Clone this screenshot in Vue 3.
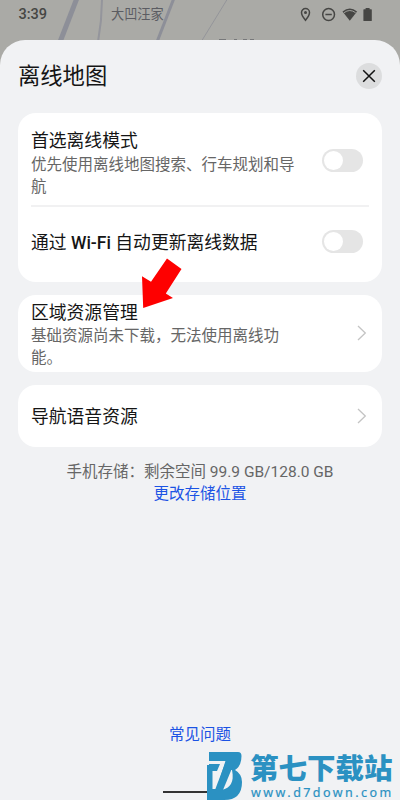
<script setup>
const mapLabel = '大凹汪家'
</script>

<template>
  <main class="phone">
    <header class="map">
      <svg class="roads" viewBox="0 0 400 70" width="400" height="70">
        <g fill="none">
          <path d="M77 -2 60 42" stroke="#8d8f98" stroke-width="5" />
          <path d="M102 -2Q102 20 98 42" stroke="#94959c" stroke-width="2" />
          <path d="M174 -2 157 42" stroke="#8d8f98" stroke-width="3" />
          <path d="M228 -2 201 42" stroke="#94959a" stroke-width="1" />
          <path d="M219 39.500h7M234 39.500h3M243 39.500h4M250 39.500h4" stroke="#77787a" stroke-width="1" />
        </g>
      </svg>
      <span class="time">3:39</span>
      <span class="place">{{ mapLabel }}</span>
      <svg class="status" viewBox="0 0 74 16" width="74" height="16">
        <path d="M5.500 1.600a4 4 0 0 0-4 4C1.500 8.600 5.500 13.300 5.500 13.300S9.500 8.600 9.500 5.600a4 4 0 0 0-4-4Z" fill="none" stroke="#464644" stroke-width="1.500" />
        <circle cx="5.500" cy="5.500" r="1.500" fill="#464644" />
        <circle cx="28.600" cy="7.500" r="5.900" fill="none" stroke="#464644" stroke-width="1.500" />
        <path d="M25.400 7.500h6.400" stroke="#464644" stroke-width="1.500" />
        <path d="M42.500 4.600Q49.800-1.400 57.100 4.600L49.800 13.800Z" fill="#464644" />
        <path d="M44 5.700Q49.800 1.300 55.600 5.700" fill="none" stroke="#aaaaa6" stroke-width=".9" />
        <path d="M65.600 1.200V1h4v1.200h1.600q.6 0 .6.600v10.600q0 .6-.6.600h-7.200q-.6 0-.6-.6V2.800q0-.6.600-.6h1.600Z" fill="#464644" />
      </svg>
    </header>

    <section class="sheet">
      <div class="heading">
        <h1>离线地图</h1>
        <button class="close" aria-label="关闭">
          <svg viewBox="0 0 26 26" width="26" height="26"><path d="m7.200 7.200 11.600 11.600M18.800 7.200 7.200 18.800" stroke="#111" stroke-width="1.500" /></svg>
        </button>
      </div>

      <div class="card settings">
        <div class="row first">
          <div class="copy">
            <h2>首选离线模式</h2>
            <p>优先使用离线地图搜索、行车规划和导航</p>
          </div>
          <span class="switch"></span>
        </div>
        <div class="row second">
          <h2>通过 <b>Wi-Fi</b> 自动更新离线数据</h2>
          <span class="switch"></span>
        </div>
      </div>

      <div class="card region">
        <div class="copy">
          <h2>区域资源管理</h2>
          <p>基础资源尚未下载，无法使用离线功能。</p>
        </div>
        <svg class="chevron" viewBox="0 0 10 16" width="10" height="16"><path d="m1 1 7.300 7L1 15" fill="none" stroke="#c4c4c4" stroke-width="1.300" /></svg>
      </div>

      <div class="card voice">
        <h2>导航语音资源</h2>
        <svg class="chevron" viewBox="0 0 10 16" width="10" height="16"><path d="m1 1 7.300 7L1 15" fill="none" stroke="#c4c4c4" stroke-width="1.300" /></svg>
      </div>

      <p class="storage">手机存储：剩余空间 99.9 GB/128.0 GB</p>
      <a class="link">更改存储位置</a>
      <a class="link faq">常见问题</a>
    </section>

    <svg class="arrow" viewBox="0 0 44 54" width="44" height="54"><path d="M27 2.500 41.500 13 25.800 37.500 33 42 3.200 52 2 20.200 11 25.700Z" fill="#fe0000" /></svg>
    <span class="home"></span>
    <div class="watermark">
      <svg class="logo" viewBox="0 0 36 48" width="36" height="48">
        <path d="M2 0H31Q34.500 0 34.500 4Q34.500 14 28 18Q35 22 35 30Q35 48 17 48H0V13H2Z" fill="#2b91c2" />
        <path d="M0 9H18.500L9.500 37H5.500V19H10L13 12H0Z" fill="#f1f2f4" />
        <path d="M25 18Q28.500 35 14.500 38L22 18Z" fill="#f1f2f4" />
        <path d="M19 9H28L16 38H8Z" fill="#2b91c2" />
      </svg>
      <div class="brand">
        <span class="brand-name">第七下载站</span>
        <span class="brand-url">www.d7down.com</span>
      </div>
    </div>
  </main>
</template>

<style>
body { margin: 0; }
</style>

<style scoped>
* { box-sizing: border-box; }
.phone { position: relative; width: 400px; height: 800px; overflow: hidden; background: #aaaaa6; font-family: Roboto, "Noto Sans CJK SC", sans-serif; color: #151515; }
.map { position: relative; height: 40px; }
.roads { position: absolute; left: 0; top: 0; }
.time { position: absolute; left: 18.500px; top: 5px; font: 500 14.500px/20px Roboto, sans-serif; color: #464644; }
.place { position: absolute; left: 111px; top: 5px; font-size: 13.200px; line-height: 20px; color: #5b5c62; }
.status { position: absolute; left: 300px; top: 7px; }
.sheet { position: relative; display: flex; flex-direction: column; height: 760px; padding: 0 18px; background: #f1f2f4; border-radius: 25px 25px 0 0; }
.heading { display: flex; height: 73px; align-items: center; justify-content: space-between; padding-bottom: 1px; }
h1, h2, p { margin: 0; font-weight: 400; }
h1 { font-size: 22.300px; line-height: 30px; }
h2 { font-size: 17.800px; line-height: 24px; white-space: nowrap; font-weight: 400; padding-top: 2px; }
h2 b { font-weight: 500; font-size: 17.500px; }
p { font-size: 15.500px; line-height: 22.500px; color: #666; }
.close { width: 26px; height: 26px; padding: 0; border: 0; border-radius: 50%; background: #dcddde; }
.close svg { display: block; }
.card { flex: none; background: #fff; border-radius: 18px; padding: 0 13px; }
.settings { height: 169px; }
.row { display: flex; align-items: center; justify-content: space-between; }
.first { height: 94px; border-bottom: 2px solid #f1f1f2; padding-top: 3px; }
.first p { padding-top: 1px; }
.first .copy { padding-top: 4px; }
.second { height: 69px; }
.copy { width: 270px; }
.switch { width: 41px; height: 23px; padding: 2px; margin-right: 6px; border-radius: 12px; background: #e5e5e5; }
.switch::before { content: ""; display: block; width: 19px; height: 19px; border-radius: 50%; background: #fff; }
.region { display: flex; align-items: center; justify-content: space-between; height: 77px; margin-top: 13px; }
.region .copy { width: 254px; padding-top: 1px; }
.region p { line-height: 22px; }
.voice { display: flex; align-items: center; justify-content: space-between; height: 62px; margin-top: 13px; }
.chevron { margin-right: 2px; margin-bottom: 1px; }
.storage { margin-top: 14px; text-align: center; line-height: 22px; }
.link { text-align: center; font-size: 15.500px; line-height: 22px; color: #1b53e4; }
.faq { margin-top: 219px; }
.arrow { position: absolute; left: 140px; top: 256px; }
.home { position: absolute; left: 163px; top: 791px; width: 75px; height: 2px; background: #333; }
.watermark { position: absolute; left: 207px; top: 752px; display: flex; }
.brand { display: flex; flex-direction: column; margin-left: 7px; color: #2b91c2; }
.brand-name { font: 900 28.500px/30px "Noto Sans CJK SC", sans-serif; white-space: nowrap; }
.brand-url { font: 400 12.500px/13px "Noto Sans", sans-serif; letter-spacing: 2.450px; margin-top: 4px; padding-left: 1px; white-space: nowrap; -webkit-text-stroke: .2px #2b91c2; }
</style>
